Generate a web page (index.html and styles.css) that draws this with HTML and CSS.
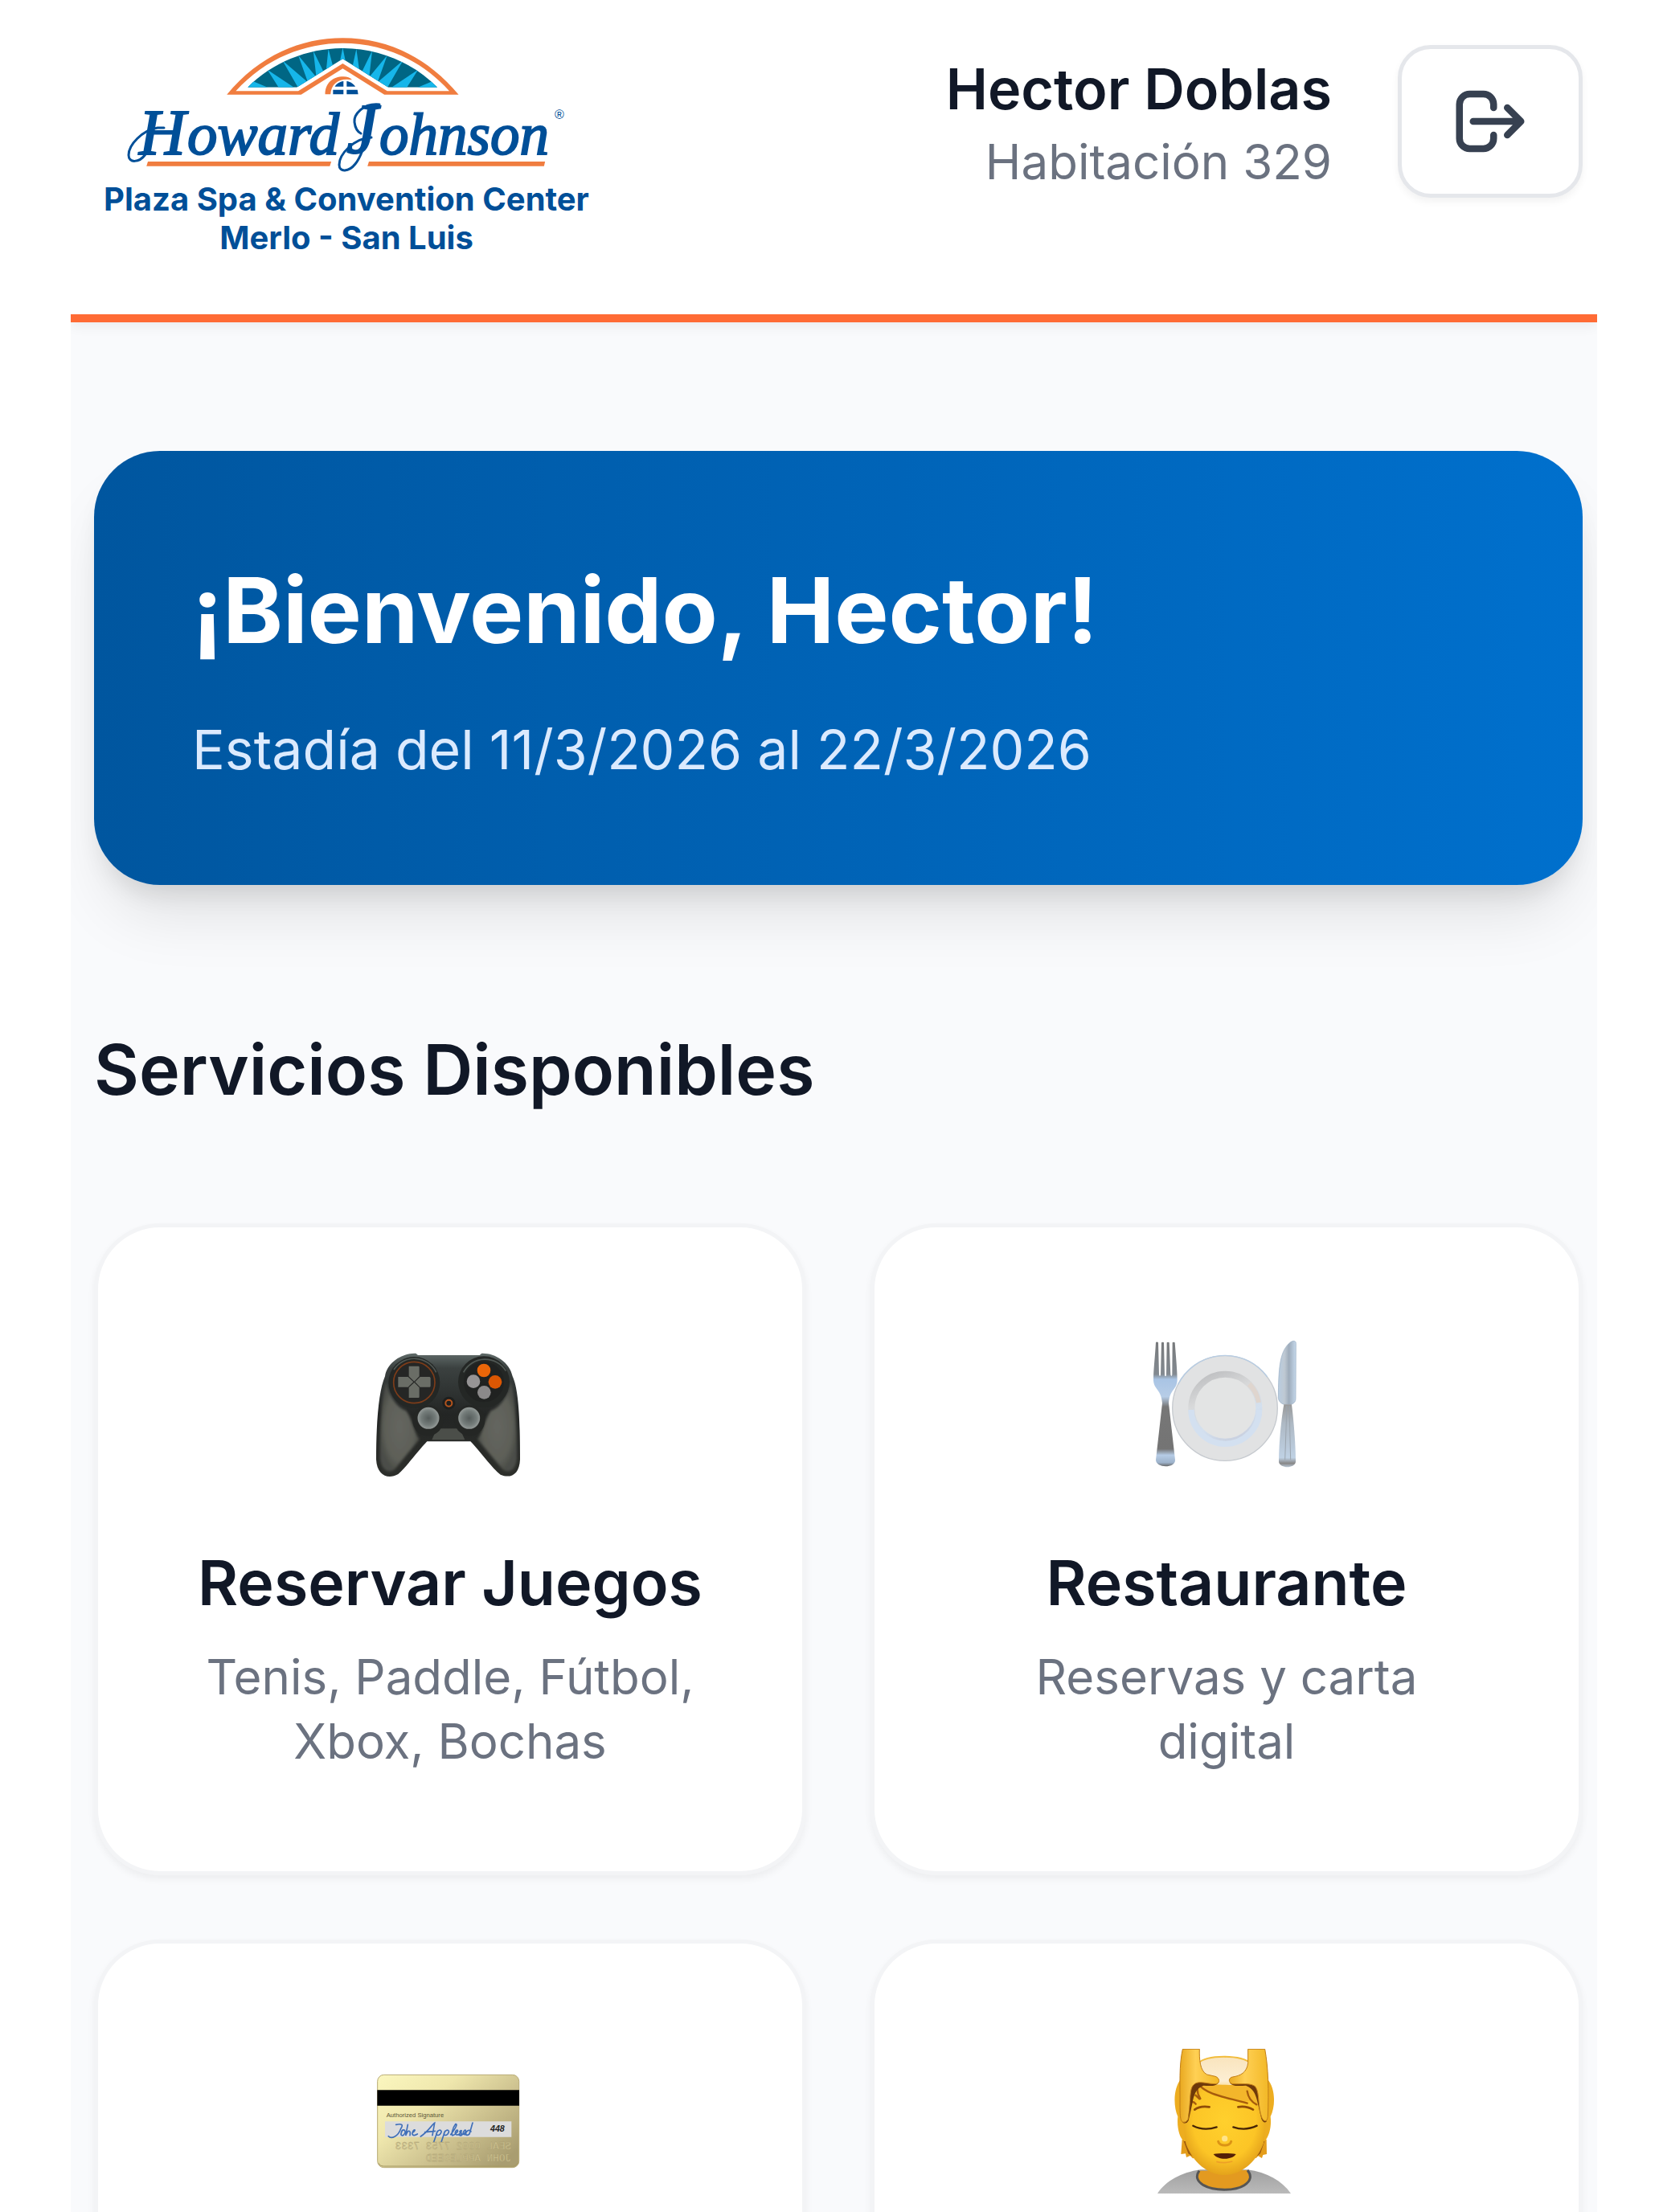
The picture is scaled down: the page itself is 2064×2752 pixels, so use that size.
FILE: index.html
```html
<!DOCTYPE html>
<html lang="es">
<head>
<meta charset="utf-8">
<meta name="viewport" content="width=device-width, initial-scale=1">
<title>Howard Johnson Merlo</title>
<link rel="stylesheet" href="styles.css">
</head>
<body>
<div class="shell">
  <header class="header">
    <svg class="logo" viewBox="117 20 640 300" role="img" aria-label="Howard Johnson Plaza Spa &amp; Convention Center Merlo - San Luis">
      <defs>
        <clipPath id="fan"><path d="M511 266C580 172 680 120 776 120S972 172 1040 266H903L776 160L648 266Z"/></clipPath>
      </defs>
      <g transform="translate(80 20) scale(.4464 .3333)">
        <path fill="#f07d3f" fill-rule="evenodd" d="M453 293C545 145 660 82 776 82S1006 145 1099 293H892L776 196L660 293ZM478 280H652L776 177L900 280H1073C990 155 880 101 776 101S562 155 478 280Z"/>
        <g clip-path="url(#fan)">
          <path fill="#006684" d="M500 100H1050V280H500Z"/>
          <path fill="#16b6ea" d="M516 238L570 268H511ZM566 200L642 268H598ZM608 166L676 244L652 268ZM652 146L700 224L678 244ZM694 130L722 206L702 224ZM736 122L748 184L730 200ZM776 118L784 170H768ZM814 122L804 184L822 200ZM858 130L830 206L850 224ZM900 146L852 224L874 244ZM944 166L876 244L900 268ZM986 200L910 268H954ZM1036 238L982 268H1040Z"/>
        </g>
        <path fill="#f07d3f" d="M727 292C727 250 748 226 778 226Q794 226 802 238C766 230 744 252 742 292Z"/>
        <path fill="#004f98" d="M754 263C758 253 768 245 778 243V263ZM787 243C798 245 807 254 811 263H787ZM749 275H778V292H749ZM787 275H817L819 292H787Z"/>
        <path fill="#f07d3f" d="M233 543H744L740 560H229ZM849 543H1340L1337 560H845Z"/>
      </g>
      <g class="logo-swash">
        <path d="M204 159H196C177 162 160 180 160 193C160 203 173 203 181 192L186 184"/>
        <path d="M462 171C440 172 422 192 422 205C422 215 434 214 442 204C450 194 454 180 457 164M472 130C451 128 440 143 441 152C442 160 445 164 449 166"/>
      </g>
      <g class="logo-script">
        <text x="173" y="192" font-size="80">H</text>
        <text x="233" y="192" font-size="75">oward</text>
        <text x="431" y="190" font-size="88">J</text>
        <text x="472" y="192" font-size="73">ohnson</text>
      </g>
      <text class="logo-mark" x="690" y="148">®</text>
      <g class="logo-name">
        <text x="431" y="262">Plaza Spa &amp; Convention Center</text>
        <text x="431" y="310">Merlo - San Luis</text>
      </g>
    </svg>
    <div class="account">
      <div class="guest">
        <p class="guest-name">Hector Doblas</p>
        <p class="guest-room">Habitación 329</p>
      </div>
      <button class="logout" type="button" aria-label="Cerrar sesión">
        <svg viewBox="0 0 24 24" aria-hidden="true"><path d="M17 16l4-4m0 0l-4-4m4 4H7m6 4v1a3 3 0 01-3 3H6a3 3 0 01-3-3V7a3 3 0 013-3h4a3 3 0 013 3v1"/></svg>
      </button>
    </div>
  </header>
  <main class="main">
    <section class="hero">
      <h1>¡Bienvenido, Hector!</h1>
      <p>Estadía del 11/3/2026 al 22/3/2026</p>
    </section>
    <h2 class="section-title">Servicios Disponibles</h2>
    <nav class="services" aria-label="Servicios">
      <a class="card" href="#juegos">
        <svg class="art" viewBox="0 0 720 660" aria-hidden="true">
          <defs>
            <linearGradient id="pad" x2="0" y2="1"><stop stop-color="#606b69"/><stop offset=".12" stop-color="#3b4140"/><stop offset=".5" stop-color="#232524"/><stop offset="1" stop-color="#2d2f2b"/></linearGradient>
            <radialGradient id="grip"><stop stop-color="#65665f"/><stop offset=".75" stop-color="#5d5f58"/><stop offset="1" stop-color="#4c4e48"/></radialGradient>
            <radialGradient id="stick"><stop stop-color="#555c5b"/><stop offset=".7" stop-color="#747c7a"/><stop offset="1" stop-color="#8d9492"/></radialGradient>
            <filter id="soft" x="-10%" y="-10%" width="120%" height="120%"><feGaussianBlur stdDeviation="5"/></filter>
          </defs>
          <path fill="url(#pad)" d="M232 104C185 102 125 135 117 190C95 240 84 350 84 500C87 560 128 576 166 555C195 530 240 468 274 433H436C470 468 518 535 548 557C585 573 619 557 621 500C621 350 616 240 593 190C582 135 525 102 478 104L470 111H240Z"/>
          <g fill="url(#grip)" filter="url(#soft)">
            <path d="M122 212C102 270 97 400 99 495C103 545 135 555 155 535L245 425C224 398 218 345 195 318C158 304 132 262 122 212Z"/>
            <path d="M586 212C606 270 611 400 609 495C606 545 574 555 554 535L462 425C484 398 490 345 513 318C550 304 576 262 586 212Z"/>
          </g>
          <path fill="#4b4e49" d="M310 385H396L415 427H292Z"/>
          <circle cx="226" cy="213" r="96" fill="#242725"/><circle cx="486" cy="211" r="96" fill="#242725"/>
          <path d="M150 165A91 91 0 01308 175M410 175A91 91 0 01568 170" fill="none" stroke="#505854" stroke-width="5"/>
          <circle cx="226" cy="213" r="77" fill="#252625" stroke="#7d3c19" stroke-width="5"/>
          <circle cx="486" cy="211" r="75" fill="#202221"/>
          <path fill="#6a6d66" d="M206 152H242Q245 152 245 156V190L226 209L206 190V156ZM206 270H242Q245 270 245 266V232L226 213L206 232V266ZM166 192H203L223 211L203 230H166ZM284 192H248L229 211L248 230H284Q287 230 287 226V196Z"/>
          <circle cx="486" cy="168" r="25" fill="#eb6609"/><circle cx="528" cy="211" r="25" fill="#dc5703"/>
          <circle cx="447" cy="209" r="25" fill="#969495"/><circle cx="487" cy="250" r="25" fill="#8b898a"/>
          <circle cx="355" cy="290" r="24" fill="#1d1f1e"/><circle cx="355" cy="290" r="12" fill="none" stroke="#b5541d" stroke-width="6"/>
          <circle cx="277" cy="355" r="57" fill="#242624"/><circle cx="433" cy="355" r="57" fill="#242624"/>
          <circle cx="279" cy="346" r="38" fill="url(#stick)" stroke="#8d9391" stroke-width="5"/>
          <circle cx="431" cy="346" r="38" fill="url(#stick)" stroke="#8d9391" stroke-width="5"/>
        </svg>
        <h3>Reservar Juegos</h3>
        <p>Tenis, Paddle, Fútbol, Xbox, Bochas</p>
      </a>
      <a class="card" href="#restaurante">
        <svg class="art" viewBox="-12 30 720 660" aria-hidden="true">
          <defs>
            <linearGradient id="rim" x1=".2" x2=".6" y2="1"><stop stop-color="#bfc0c2"/><stop offset=".35" stop-color="#d8d9da"/><stop offset=".7" stop-color="#d3e0ef"/><stop offset="1" stop-color="#c9d0df"/></linearGradient>
            <linearGradient id="fork" x2="0" y2="1"><stop stop-color="#77797b"/><stop offset=".26" stop-color="#838a91"/><stop offset=".3" stop-color="#a9c4e4"/><stop offset=".44" stop-color="#b7cde7"/><stop offset=".52" stop-color="#777"/><stop offset=".86" stop-color="#747474"/><stop offset=".91" stop-color="#b6cce6"/><stop offset=".97" stop-color="#9db2ca"/><stop offset="1" stop-color="#666"/></linearGradient>
            <linearGradient id="knife"><stop stop-color="#b8cce0"/><stop offset=".35" stop-color="#bfc9d3"/><stop offset=".6" stop-color="#9eacbb"/><stop offset="1" stop-color="#c5d8eb"/></linearGradient>
            <linearGradient id="handle" x2="0" y2="1"><stop stop-color="#999"/><stop offset=".3" stop-color="#aeb9c4"/><stop offset=".85" stop-color="#bfd1e4"/><stop offset=".94" stop-color="#888"/><stop offset="1" stop-color="#b8c6d4"/></linearGradient>
          </defs>
          <circle cx="342" cy="339" r="196" fill="#e1e2e3" stroke="#c6cacf" stroke-width="4"/>
          <path d="M167 250A196 196 0 01500 222" fill="none" stroke="#b8cde3" stroke-width="4"/>
          <circle cx="343" cy="338" r="126" fill="#e3e4e4" stroke="url(#rim)" stroke-width="24"/>
          <path d="M432 249A126 126 0 01468 318" fill="none" stroke="#dfd5ce" stroke-width="18"/>
          <path d="M216 345A127 127 0 00470 345" fill="none" stroke="#d3e0f0" stroke-width="22"/>
          <path fill="url(#fork)" d="M84 93Q89 90 93 94L96 214Q99 224 102 214L105 94Q110 90 114 94L117 216Q120 224 123 216L125 94Q130 90 134 94L139 214Q142 224 145 214L146 94Q151 90 155 94C159 150 164 195 164 235C162 272 136 268 132 320L156 532C158 564 84 564 84 532L108 320C104 268 77 270 75 235C75 195 81 150 84 93Z"/>
          <path fill="url(#knife)" stroke="#99adc2" stroke-width="2" d="M607 97C607 84 592 86 580 98C546 132 542 190 541 302C544 318 558 324 564 325H590C600 320 606 315 606 303Z"/>
          <path fill="url(#handle)" d="M562 325H591C598 380 606 475 606 540C600 565 549 565 543 540C543 475 552 380 562 325Z"/>
          <path d="M573 330L566 532M582 330L587 532" stroke="#9ca6b0" stroke-width="3"/>
        </svg>
        <h3>Restaurante</h3>
        <p>Reservas y carta digital</p>
      </a>
      <a class="card" href="#cuenta" aria-label="Tarjeta">
        <svg class="art" viewBox="0 -30 720 660" aria-hidden="true">
          <defs>
            <linearGradient id="gold" y2=".8"><stop stop-color="#fbf7bf"/><stop offset=".35" stop-color="#efe7ad"/><stop offset=".65" stop-color="#cfc491"/><stop offset="1" stop-color="#a99d70"/></linearGradient>
          </defs>
          <rect x="89" y="94" width="528" height="346" rx="24" fill="url(#gold)" stroke="#b8ab76" stroke-width="3"/>
          <path d="M94 424Q96 434 112 435H594Q608 434 612 424" fill="none" stroke="#a79a64" stroke-width="3"/>
          <path d="M88 151H618V209H88Z"/>
          <text class="card-label" x="122" y="251">Authorized Signature</text>
          <path fill="#dcdcdc" d="M117 268H589V326H117Z"/>
          <g class="signature">
            <path d="M158 280C180 275 186 280 176 295C166 325 140 335 130 323M178 310C180 296 196 296 191 312C185 325 173 322 178 310M202 280L194 321C204 296 214 300 210 320M219 311C232 302 230 296 223 302C214 315 220 326 238 315M250 324C278 306 294 278 302 274L294 320M266 308L304 304M313 304L299 345M311 308C323 292 333 304 322 316C314 323 308 318 309 312M341 304L327 345M339 308C351 292 361 304 350 316C342 323 336 318 337 312M362 317C384 290 388 276 380 278C370 290 362 322 370 320C380 318 394 302 386 300C376 306 376 322 392 317C410 300 400 298 396 306C414 320 398 324 394 318C412 320 424 304 416 300C406 306 406 322 420 315M444 273L432 315C420 324 414 316 422 306C430 296 438 304 438 306"/>
          </g>
          <text class="card-code" x="510" y="307">448</text>
          <g class="embossed" transform="scale(-1 1)">
            <text x="-588" y="371">SEAL 0002 7753 7333</text>
            <text x="-588" y="418">JOHN APPLESEED</text>
          </g>
        </svg>
      </a>
      <a class="card" href="#spa" aria-label="Spa">
        <svg class="art" viewBox="-12 30 720 660" aria-hidden="true">
          <defs>
            <radialGradient id="face" cx=".5" cy=".45" r=".6"><stop stop-color="#ffd02d"/><stop offset=".65" stop-color="#fcc526"/><stop offset="1" stop-color="#dd9818"/></radialGradient>
            <linearGradient id="arm"><stop stop-color="#e9a921"/><stop offset=".4" stop-color="#ffd054"/><stop offset="1" stop-color="#f2b827"/></linearGradient>
            <linearGradient id="cap" x2="0" y2="1"><stop stop-color="#f9e4bd"/><stop offset=".7" stop-color="#fceed3"/><stop offset="1" stop-color="#fbd06a"/></linearGradient>
            <linearGradient id="shirt" x2="0" y2="1"><stop stop-color="#a0a0a0"/><stop offset="1" stop-color="#bababa"/></linearGradient>
          </defs>
          <path fill="url(#shirt)" d="M90 597C120 550 180 518 250 508H425C500 518 555 550 588 597Z"/>
          <path fill="#e39a20" stroke="#555" stroke-width="9" d="M246 512C232 532 236 550 262 566C300 588 380 588 414 566C440 550 442 530 426 510"/>
          <path fill="#e49d1b" d="M182 395L178 450L195 448L198 462L212 456L222 466L240 462V395ZM497 395L498 450L484 453L480 465L466 457L458 465L445 460V395Z"/>
          <path fill="#9c5a0e" d="M186 396L205 448L216 455L226 460L206 405ZM492 396L474 448L464 456L450 460L476 405Z"/>
          <path fill="#edad20" d="M178 170C150 200 148 270 166 310C162 350 172 390 190 402H490C510 380 516 340 512 310C532 270 530 200 500 170Z"/>
          <path fill="url(#face)" d="M200 190C190 250 184 350 196 410C222 482 280 528 340 528S458 482 486 410C498 340 492 240 478 190C430 150 250 150 200 190Z"/>
          <path fill="url(#cap)" stroke="#f2bd3e" stroke-width="6" d="M240 112C275 78 400 78 440 112V190L335 215L240 190Z"/>
          <path fill="#f3b62b" d="M235 185C290 192 400 192 450 195L470 265C440 250 425 250 410 256C360 240 270 240 235 185Z"/>
          <path d="M244 190C275 230 350 238 425 260M425 215Q430 250 460 265M244 188Q232 215 250 243M232 230L247 244M216 256Q225 252 233 263" fill="none" stroke="#a65b0c" stroke-width="7" stroke-linecap="round"/>
          <path fill="#6e390a" d="M236 178L318 182C310 198 285 196 262 194C235 205 226 225 220 262L206 325Q198 340 184 332L200 250L205 200ZM446 178L360 182C368 198 393 196 420 194C447 205 456 225 462 250L478 318Q486 337 497 329L484 250Z"/>
          <path fill="url(#arm)" stroke="#c27e16" stroke-width="3" d="M184 58H247C246 95 248 140 275 153L306 160C322 165 326 186 308 188C280 188 253 178 237 184C204 196 218 235 204 320Q198 333 186 331C172 328 175 290 174 270C175 190 170 120 184 58Z"/>
          <path fill="url(#arm)" stroke="#c27e16" stroke-width="3" d="M428 58H491C504 130 506 210 502 310C500 330 488 331 480 315C464 275 472 225 457 200C443 182 400 190 370 188C354 184 354 165 370 162C400 158 424 145 428 110Z"/>
          <path fill="#fff" d="M165 40H520V57H165Z"/>
          <path d="M229 284C242 274 264 271 284 274M391 274C410 271 432 275 447 284" fill="none" stroke="#8f4c08" stroke-width="8" stroke-linecap="round"/>
          <path d="M223 344C248 357 280 359 311 349M373 349C402 359 434 357 461 344" fill="none" stroke="#472506" stroke-width="7" stroke-linecap="round"/>
          <path d="M317 403C320 422 362 422 365 403" fill="none" stroke="#dc9415" stroke-width="9" stroke-linecap="round"/>
          <circle cx="341" cy="392" r="11" fill="#ffe48a"/>
          <path fill="#542007" d="M299 450C320 446 362 446 383 450C370 472 315 474 299 450Z"/>
          <path d="M310 478Q340 486 370 477" fill="none" stroke="#ed9f27" stroke-width="5"/>
        </svg>
      </a>
    </nav>
  </main>
</div>
</body>
</html>
```

FILE: styles.css
```css
* { box-sizing: border-box; }

body {
  margin: 0;
  height: 100vh;
  overflow: hidden;
  background: #fff;
  color: #111827;
  font-family: Inter, "Liberation Sans", sans-serif;
}

h1, h2, h3, p { margin: 0; }

.shell {
  margin: 0 77px 0 88px;
  height: 100vh;
  overflow: hidden;
  background: #f9fafc;
}

.header {
  display: flex;
  justify-content: space-between;
  align-items: flex-start;
  min-height: 401px;
  padding: 20px 18px 0 29px;
  background: #fff;
  border-bottom: 10px solid #ff6b35;
  box-shadow: 0 5px 15px rgba(0, 0, 0, .06);
}

.logo { width: 640px; height: 300px; flex: none; }
.logo-script {
  font-family: "Liberation Serif", serif;
  font-style: italic;
  fill: #004f98;
  stroke: #004f98;
  stroke-width: 2px;
}
.logo-swash { fill: none; stroke: #004f98; stroke-width: 3px; stroke-linecap: round; }
.logo-mark { font-family: "Liberation Sans", sans-serif; font-size: 16px; fill: #004f98; }
.logo-name { font-weight: 700; font-size: 40px; fill: #004f98; text-anchor: middle; }

.account { display: flex; align-items: center; gap: 82px; padding-top: 36px; }
.guest { text-align: right; white-space: nowrap; }
.guest-name { font-size: 70px; line-height: 100px; font-weight: 600; }
.guest-room { font-size: 60px; line-height: 80px; color: #6b7280; }

.logout {
  display: flex;
  padding: 39px 59px;
  border: 5px solid #e5e7eb;
  border-radius: 41px;
  background: #fff;
  color: #374151;
  box-shadow: 0 5px 10px rgba(0, 0, 0, .05);
}
.logout svg {
  width: 102px;
  height: 102px;
  fill: none;
  stroke: currentColor;
  stroke-width: 2;
  stroke-linecap: round;
  stroke-linejoin: round;
}

.main { padding: 160px 18px 80px 29px; }

.hero {
  display: flex;
  flex-direction: column;
  gap: 50px;
  padding: 122px;
  border-radius: 82px;
  background: linear-gradient(90deg, #00569f, #0070cd);
  color: #fff;
  box-shadow: 0 51px 77px -15px rgba(0, 0, 0, .1), 0 20px 31px -10px rgba(0, 0, 0, .1);
}
.hero h1 { font-size: 113px; line-height: 152px; font-weight: 700; }
.hero p { font-size: 68px; line-height: 94px; color: #dbeafe; }

.section-title { margin: 160px 0 121px; font-size: 86px; line-height: 140px; font-weight: 600; }

.services {
  display: grid;
  grid-template-columns: repeat(2, minmax(0, 1fr));
  grid-auto-rows: 1fr;
  gap: 80px;
}

.card {
  display: flex;
  flex-direction: column;
  align-items: center;
  padding: 122px;
  border: 5px solid #f3f4f6;
  border-radius: 82px;
  background: #fff;
  color: inherit;
  text-align: center;
  text-decoration: none;
  box-shadow: 0 5px 10px rgba(0, 0, 0, .05);
}
.art { width: 240px; height: 220px; }
.card h3 { margin: 50px 0 27px; font-size: 77px; line-height: 100px; font-weight: 600; white-space: nowrap; }
.card p { font-size: 60px; line-height: 80px; color: #6b7280; }

.card-label { font-family: "Liberation Sans", sans-serif; font-size: 23px; fill: #5c5637; }
.card-code { font-family: "Liberation Sans", sans-serif; font-size: 32px; font-weight: 700; font-style: italic; fill: #222; }
.signature { fill: none; stroke: #3f6fb8; stroke-width: 5px; stroke-linecap: round; }
.embossed { font-family: "Liberation Mono", monospace; font-size: 38px; fill: #d3c895; stroke: #a99c70; stroke-width: 1px; }
```
